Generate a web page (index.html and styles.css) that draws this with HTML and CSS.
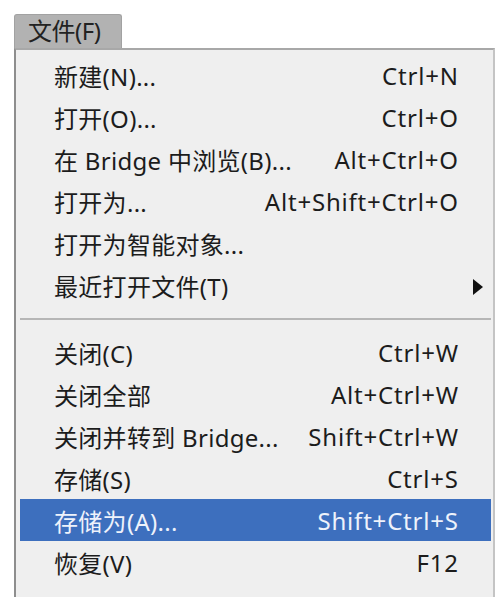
FILE: index.html
```html
<!DOCTYPE html>
<html lang="zh-CN">
<head>
<meta charset="utf-8">
<title>文件菜单</title>
<link rel="stylesheet" href="styles.css">
</head>
<body>
<div class="menubar">
  <div class="tab">文件(F)</div>
</div>
<div class="menu">
  <div class="item"><span class="label">新建(N)...</span><span class="key">Ctrl+N</span></div>
  <div class="item"><span class="label">打开(O)...</span><span class="key">Ctrl+O</span></div>
  <div class="item"><span class="label">在 Bridge 中浏览(B)...</span><span class="key">Alt+Ctrl+O</span></div>
  <div class="item"><span class="label">打开为...</span><span class="key">Alt+Shift+Ctrl+O</span></div>
  <div class="item"><span class="label">打开为智能对象...</span><span class="key"></span></div>
  <div class="item"><span class="label">最近打开文件(T)</span><span class="key"></span><span class="arrow"></span></div>
  <div class="sep"></div>
  <div class="item"><span class="label">关闭(C)</span><span class="key">Ctrl+W</span></div>
  <div class="item"><span class="label">关闭全部</span><span class="key">Alt+Ctrl+W</span></div>
  <div class="item"><span class="label">关闭并转到 Bridge...</span><span class="key">Shift+Ctrl+W</span></div>
  <div class="item"><span class="label">存储(S)</span><span class="key">Ctrl+S</span></div>
  <div class="item active"><span class="label">存储为(A)...</span><span class="key">Shift+Ctrl+S</span></div>
  <div class="item"><span class="label">恢复(V)</span><span class="key">F12</span></div>
</div>
</body>
</html>
```
FILE: styles.css
```css
html, body {
  margin: 0;
  padding: 0;
  background: #ffffff;
}
body {
  width: 501px;
  height: 597px;
  overflow: hidden;
  font-family: "Noto Sans", "Noto Sans CJK SC", sans-serif;
  font-size: 24px;
  color: #1c1c1c;
}
.menubar {
  padding: 14px 0 0 14px;
  display: flex;
}
.tab {
  width: 108px;
  height: 34px;
  box-sizing: border-box;
  background: #b2b2b2;
  border: 1px solid #a2a2a2;
  border-bottom: none;
  border-radius: 3px 3px 0 0;
  padding-left: 13px;
  line-height: 32px;
  color: #222;
  letter-spacing: -0.5px;
}
.menu {
  margin-left: 14px;
  width: 481px;
  height: 560px;
  box-sizing: border-box;
  background: #efefef;
  border-top: 2px solid #a8a8a8;
  border-left: 2px solid #8e8e8e;
  border-right: 2px solid #c4c4c4;
  padding: 4px 2px 0 4px;
}
.item {
  height: 42px;
  display: flex;
  align-items: center;
  padding: 0 33px 0 34px;
  position: relative;
}
.label {
  flex: 1;
  white-space: nowrap;
  letter-spacing: 0.3px;
}
.key {
  white-space: nowrap;
  letter-spacing: 0.8px;
  margin-right: -0.8px;
}
.arrow {
  position: absolute;
  right: 8px;
  top: 15px;
  width: 0;
  height: 0;
  border-top: 8px solid transparent;
  border-bottom: 8px solid transparent;
  border-left: 10px solid #111;
}
.sep {
  height: 2px;
  background: #b6b6b6;
  margin: 12px 0 11px 0;
}
.active {
  background: #3d6fbe;
  color: #eef2fb;
}
```
